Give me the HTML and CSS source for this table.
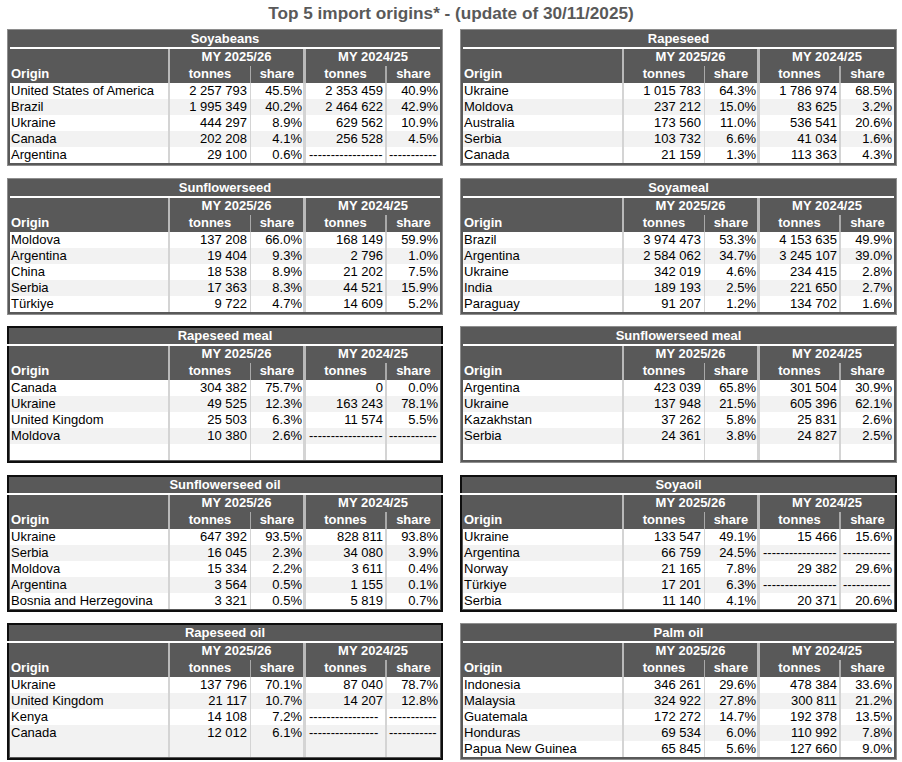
FILE: index.html
```html
<!DOCTYPE html>
<html lang="en">
<head>
<meta charset="utf-8">
<title>Top 5 import origins</title>
<link rel="stylesheet" href="styles.css">
</head>
<body>
<h1 class="page-title">Top 5 import origins* - (update of 30/11/2025)</h1>
<main class="board">

<section class="panel light">
  <div class="panel-title">Soyabeans</div>
  <div class="panel-body">
    <div class="head"><div class="origin">Origin</div><div class="my1">MY 2025/26</div><div class="my2">MY 2024/25</div><div class="t1">tonnes</div><div class="s1">share</div><div class="t2">tonnes</div><div class="s2">share</div></div>
    <div class="rows">
      <div class="row"><div class="c1">United States of America</div><div class="c2">2 257 793</div><div class="c3">45.5%</div><div class="c4">2 353 459</div><div class="c5">40.9%</div></div>
      <div class="row"><div class="c1">Brazil</div><div class="c2">1 995 349</div><div class="c3">40.2%</div><div class="c4">2 464 622</div><div class="c5">42.9%</div></div>
      <div class="row"><div class="c1">Ukraine</div><div class="c2">444 297</div><div class="c3">8.9%</div><div class="c4">629 562</div><div class="c5">10.9%</div></div>
      <div class="row"><div class="c1">Canada</div><div class="c2">202 208</div><div class="c3">4.1%</div><div class="c4">256 528</div><div class="c5">4.5%</div></div>
      <div class="row"><div class="c1">Argentina</div><div class="c2">29 100</div><div class="c3">0.6%</div><div class="c4 dash">-----------------</div><div class="c5 dash">-----------</div></div>
    </div>
  </div>
</section>

<section class="panel light">
  <div class="panel-title">Rapeseed</div>
  <div class="panel-body">
    <div class="head"><div class="origin">Origin</div><div class="my1">MY 2025/26</div><div class="my2">MY 2024/25</div><div class="t1">tonnes</div><div class="s1">share</div><div class="t2">tonnes</div><div class="s2">share</div></div>
    <div class="rows">
      <div class="row"><div class="c1">Ukraine</div><div class="c2">1 015 783</div><div class="c3">64.3%</div><div class="c4">1 786 974</div><div class="c5">68.5%</div></div>
      <div class="row"><div class="c1">Moldova</div><div class="c2">237 212</div><div class="c3">15.0%</div><div class="c4">83 625</div><div class="c5">3.2%</div></div>
      <div class="row"><div class="c1">Australia</div><div class="c2">173 560</div><div class="c3">11.0%</div><div class="c4">536 541</div><div class="c5">20.6%</div></div>
      <div class="row"><div class="c1">Serbia</div><div class="c2">103 732</div><div class="c3">6.6%</div><div class="c4">41 034</div><div class="c5">1.6%</div></div>
      <div class="row"><div class="c1">Canada</div><div class="c2">21 159</div><div class="c3">1.3%</div><div class="c4">113 363</div><div class="c5">4.3%</div></div>
    </div>
  </div>
</section>

<section class="panel light">
  <div class="panel-title">Sunflowerseed</div>
  <div class="panel-body">
    <div class="head"><div class="origin">Origin</div><div class="my1">MY 2025/26</div><div class="my2">MY 2024/25</div><div class="t1">tonnes</div><div class="s1">share</div><div class="t2">tonnes</div><div class="s2">share</div></div>
    <div class="rows">
      <div class="row"><div class="c1">Moldova</div><div class="c2">137 208</div><div class="c3">66.0%</div><div class="c4">168 149</div><div class="c5">59.9%</div></div>
      <div class="row"><div class="c1">Argentina</div><div class="c2">19 404</div><div class="c3">9.3%</div><div class="c4">2 796</div><div class="c5">1.0%</div></div>
      <div class="row"><div class="c1">China</div><div class="c2">18 538</div><div class="c3">8.9%</div><div class="c4">21 202</div><div class="c5">7.5%</div></div>
      <div class="row"><div class="c1">Serbia</div><div class="c2">17 363</div><div class="c3">8.3%</div><div class="c4">44 521</div><div class="c5">15.9%</div></div>
      <div class="row"><div class="c1">Türkiye</div><div class="c2">9 722</div><div class="c3">4.7%</div><div class="c4">14 609</div><div class="c5">5.2%</div></div>
    </div>
  </div>
</section>

<section class="panel light">
  <div class="panel-title">Soyameal</div>
  <div class="panel-body">
    <div class="head"><div class="origin">Origin</div><div class="my1">MY 2025/26</div><div class="my2">MY 2024/25</div><div class="t1">tonnes</div><div class="s1">share</div><div class="t2">tonnes</div><div class="s2">share</div></div>
    <div class="rows">
      <div class="row"><div class="c1">Brazil</div><div class="c2">3 974 473</div><div class="c3">53.3%</div><div class="c4">4 153 635</div><div class="c5">49.9%</div></div>
      <div class="row"><div class="c1">Argentina</div><div class="c2">2 584 062</div><div class="c3">34.7%</div><div class="c4">3 245 107</div><div class="c5">39.0%</div></div>
      <div class="row"><div class="c1">Ukraine</div><div class="c2">342 019</div><div class="c3">4.6%</div><div class="c4">234 415</div><div class="c5">2.8%</div></div>
      <div class="row"><div class="c1">India</div><div class="c2">189 193</div><div class="c3">2.5%</div><div class="c4">221 650</div><div class="c5">2.7%</div></div>
      <div class="row"><div class="c1">Paraguay</div><div class="c2">91 207</div><div class="c3">1.2%</div><div class="c4">134 702</div><div class="c5">1.6%</div></div>
    </div>
  </div>
</section>

<section class="panel dark">
  <div class="panel-title">Rapeseed meal</div>
  <div class="panel-body">
    <div class="head"><div class="origin">Origin</div><div class="my1">MY 2025/26</div><div class="my2">MY 2024/25</div><div class="t1">tonnes</div><div class="s1">share</div><div class="t2">tonnes</div><div class="s2">share</div></div>
    <div class="rows">
      <div class="row"><div class="c1">Canada</div><div class="c2">304 382</div><div class="c3">75.7%</div><div class="c4">0</div><div class="c5">0.0%</div></div>
      <div class="row"><div class="c1">Ukraine</div><div class="c2">49 525</div><div class="c3">12.3%</div><div class="c4">163 243</div><div class="c5">78.1%</div></div>
      <div class="row"><div class="c1">United Kingdom</div><div class="c2">25 503</div><div class="c3">6.3%</div><div class="c4">11 574</div><div class="c5">5.5%</div></div>
      <div class="row"><div class="c1">Moldova</div><div class="c2">10 380</div><div class="c3">2.6%</div><div class="c4 dash">-----------------</div><div class="c5 dash">-----------</div></div>
      <div class="row"><div class="c1"></div><div class="c2"></div><div class="c3"></div><div class="c4"></div><div class="c5"></div></div>
    </div>
  </div>
</section>

<section class="panel light">
  <div class="panel-title">Sunflowerseed meal</div>
  <div class="panel-body">
    <div class="head"><div class="origin">Origin</div><div class="my1">MY 2025/26</div><div class="my2">MY 2024/25</div><div class="t1">tonnes</div><div class="s1">share</div><div class="t2">tonnes</div><div class="s2">share</div></div>
    <div class="rows">
      <div class="row"><div class="c1">Argentina</div><div class="c2">423 039</div><div class="c3">65.8%</div><div class="c4">301 504</div><div class="c5">30.9%</div></div>
      <div class="row"><div class="c1">Ukraine</div><div class="c2">137 948</div><div class="c3">21.5%</div><div class="c4">605 396</div><div class="c5">62.1%</div></div>
      <div class="row"><div class="c1">Kazakhstan</div><div class="c2">37 262</div><div class="c3">5.8%</div><div class="c4">25 831</div><div class="c5">2.6%</div></div>
      <div class="row"><div class="c1">Serbia</div><div class="c2">24 361</div><div class="c3">3.8%</div><div class="c4">24 827</div><div class="c5">2.5%</div></div>
      <div class="row"><div class="c1"></div><div class="c2"></div><div class="c3"></div><div class="c4"></div><div class="c5"></div></div>
    </div>
  </div>
</section>

<section class="panel dark">
  <div class="panel-title">Sunflowerseed oil</div>
  <div class="panel-body">
    <div class="head"><div class="origin">Origin</div><div class="my1">MY 2025/26</div><div class="my2">MY 2024/25</div><div class="t1">tonnes</div><div class="s1">share</div><div class="t2">tonnes</div><div class="s2">share</div></div>
    <div class="rows">
      <div class="row"><div class="c1">Ukraine</div><div class="c2">647 392</div><div class="c3">93.5%</div><div class="c4">828 811</div><div class="c5">93.8%</div></div>
      <div class="row"><div class="c1">Serbia</div><div class="c2">16 045</div><div class="c3">2.3%</div><div class="c4">34 080</div><div class="c5">3.9%</div></div>
      <div class="row"><div class="c1">Moldova</div><div class="c2">15 334</div><div class="c3">2.2%</div><div class="c4">3 611</div><div class="c5">0.4%</div></div>
      <div class="row"><div class="c1">Argentina</div><div class="c2">3 564</div><div class="c3">0.5%</div><div class="c4">1 155</div><div class="c5">0.1%</div></div>
      <div class="row"><div class="c1">Bosnia and Herzegovina</div><div class="c2">3 321</div><div class="c3">0.5%</div><div class="c4">5 819</div><div class="c5">0.7%</div></div>
    </div>
  </div>
</section>

<section class="panel dark">
  <div class="panel-title">Soyaoil</div>
  <div class="panel-body">
    <div class="head"><div class="origin">Origin</div><div class="my1">MY 2025/26</div><div class="my2">MY 2024/25</div><div class="t1">tonnes</div><div class="s1">share</div><div class="t2">tonnes</div><div class="s2">share</div></div>
    <div class="rows">
      <div class="row"><div class="c1">Ukraine</div><div class="c2">133 547</div><div class="c3">49.1%</div><div class="c4">15 466</div><div class="c5">15.6%</div></div>
      <div class="row"><div class="c1">Argentina</div><div class="c2">66 759</div><div class="c3">24.5%</div><div class="c4 dash">-----------------</div><div class="c5 dash">-----------</div></div>
      <div class="row"><div class="c1">Norway</div><div class="c2">21 165</div><div class="c3">7.8%</div><div class="c4">29 382</div><div class="c5">29.6%</div></div>
      <div class="row"><div class="c1">Türkiye</div><div class="c2">17 201</div><div class="c3">6.3%</div><div class="c4 dash">-----------------</div><div class="c5 dash">-----------</div></div>
      <div class="row"><div class="c1">Serbia</div><div class="c2">11 140</div><div class="c3">4.1%</div><div class="c4">20 371</div><div class="c5">20.6%</div></div>
    </div>
  </div>
</section>

<section class="panel dark">
  <div class="panel-title">Rapeseed oil</div>
  <div class="panel-body">
    <div class="head"><div class="origin">Origin</div><div class="my1">MY 2025/26</div><div class="my2">MY 2024/25</div><div class="t1">tonnes</div><div class="s1">share</div><div class="t2">tonnes</div><div class="s2">share</div></div>
    <div class="rows">
      <div class="row"><div class="c1">Ukraine</div><div class="c2">137 796</div><div class="c3">70.1%</div><div class="c4">87 040</div><div class="c5">78.7%</div></div>
      <div class="row"><div class="c1">United Kingdom</div><div class="c2">21 117</div><div class="c3">10.7%</div><div class="c4">14 207</div><div class="c5">12.8%</div></div>
      <div class="row"><div class="c1">Kenya</div><div class="c2">14 108</div><div class="c3">7.2%</div><div class="c4 dash">----------------</div><div class="c5 dash">-----------</div></div>
      <div class="row"><div class="c1">Canada</div><div class="c2">12 012</div><div class="c3">6.1%</div><div class="c4 dash">----------------</div><div class="c5 dash">-----------</div></div>
      <div class="row shade"><div class="c1"></div><div class="c2"></div><div class="c3"></div><div class="c4"></div><div class="c5"></div></div>
    </div>
  </div>
</section>

<section class="panel light">
  <div class="panel-title">Palm oil</div>
  <div class="panel-body">
    <div class="head"><div class="origin">Origin</div><div class="my1">MY 2025/26</div><div class="my2">MY 2024/25</div><div class="t1">tonnes</div><div class="s1">share</div><div class="t2">tonnes</div><div class="s2">share</div></div>
    <div class="rows">
      <div class="row"><div class="c1">Indonesia</div><div class="c2">346 261</div><div class="c3">29.6%</div><div class="c4">478 384</div><div class="c5">33.6%</div></div>
      <div class="row"><div class="c1">Malaysia</div><div class="c2">324 922</div><div class="c3">27.8%</div><div class="c4">300 811</div><div class="c5">21.2%</div></div>
      <div class="row"><div class="c1">Guatemala</div><div class="c2">172 272</div><div class="c3">14.7%</div><div class="c4">192 378</div><div class="c5">13.5%</div></div>
      <div class="row"><div class="c1">Honduras</div><div class="c2">69 534</div><div class="c3">6.0%</div><div class="c4">110 992</div><div class="c5">7.8%</div></div>
      <div class="row"><div class="c1">Papua New Guinea</div><div class="c2">65 845</div><div class="c3">5.6%</div><div class="c4">127 660</div><div class="c5">9.0%</div></div>
    </div>
  </div>
</section>

</main>
</body>
</html>
```

FILE: styles.css
```css
* {
  box-sizing: border-box;
}

body {
  margin: 0;
  background: #ffffff;
  color: #000000;
  font-family: "Liberation Sans", Arial, sans-serif;
  font-size: 13px;
}

.page-title {
  margin: 0;
  height: 29px;
  padding-top: 3px;
  font-size: 17.2px;
  line-height: 20px;
  font-weight: bold;
  color: #595959;
  text-align: center;
}

.board {
  display: grid;
  grid-template-columns: 436px 437px;
  column-gap: 17px;
  row-gap: 11.5px;
  padding-left: 7px;
}

/* ---------- panel frames ---------- */

.panel.light {
  border: 3px solid #595959;
  outline: 1px solid #8e8e8e;
  outline-offset: -1px;
}

.panel-title {
  background: #595959;
  color: #ffffff;
  font-weight: bold;
  text-align: center;
  line-height: 13px;
  white-space: nowrap;
}

.panel.light .panel-title {
  height: 17px;
  padding-bottom: 2px;
  border-bottom: 2px solid #ffffff;
}

.panel.dark .panel-title {
  height: 18px;
  margin-bottom: 2px;
  padding: 1px 1px 2px;
  border: 2px solid #0e0e0e;
  border-bottom: 0;
}

.panel.dark .panel-body {
  background: #595959;
  padding: 0 1px 1px;
  border: 2px solid #0e0e0e;
  border-top: 0;
}

/* ---------- header ---------- */

.head {
  display: grid;
  grid-template-columns: 1fr 82px 53px 82px 55px;
  grid-template-rows: 17px 17px;
  background: #595959;
  color: #ffffff;
  font-weight: bold;
  line-height: 16px;
  white-space: nowrap;
}

.head .origin {
  grid-column: 1;
  grid-row: 2;
  padding-left: 1px;
}

.head .my1,
.head .my2,
.head .t1,
.head .s1,
.head .t2,
.head .s2 {
  text-align: center;
  border-left: 2px solid #b9b9b9;
}

.head .my1 { grid-column: 2 / 4; grid-row: 1; }
.head .my2 { grid-column: 4 / 6; grid-row: 1; border-left-width: 3px; }
.head .t1 { grid-column: 2; grid-row: 2; }
.head .s1 { grid-column: 3; grid-row: 2; border-left-width: 1px; border-left-color: #a9a9a9; }
.head .t2 { grid-column: 4; grid-row: 2; border-left-width: 3px; }
.head .s2 { grid-column: 5; grid-row: 2; border-left-color: #a9a9a9; }

/* ---------- data rows ---------- */

.rows {
  background: #ffffff;
}

.row {
  display: grid;
  grid-template-columns: 1fr 82px 53px 82px 55px;
  height: 16px;
  line-height: 16px;
  background: #ffffff;
}

.row:nth-child(even),
.row.shade {
  background: #f2f2f2;
}

.row > div {
  white-space: nowrap;
  overflow: hidden;
  text-align: right;
  border-left: 2px solid #d4d4d4;
}

.row .c1 {
  text-align: left;
  padding-left: 1px;
  border-left: 0;
}

.row .c2 { padding-right: 3px; }
.row .c3 { padding-right: 1px; border-left-width: 1px; }
.row .c4 { padding-right: 2px; border-left-width: 3px; }
.row .c5 { padding-right: 2px; }

.row .dash {
  text-align: left;
  padding-left: 3px;
  padding-right: 0;
}

.row .c5.dash {
  padding-left: 2px;
}
```
